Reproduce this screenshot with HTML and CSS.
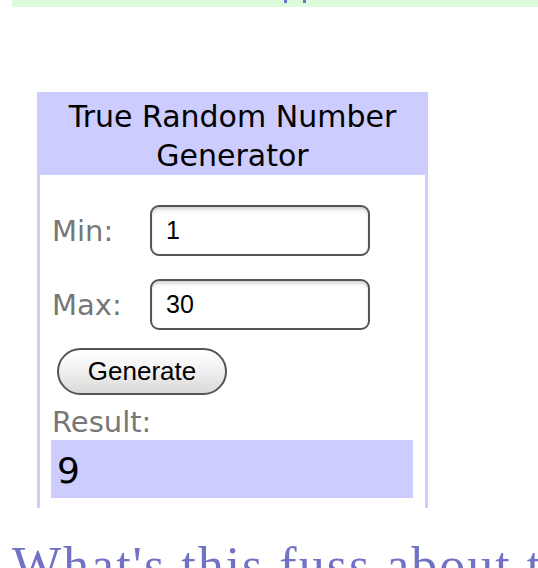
FILE: index.html
```html
<!DOCTYPE html>
<html>
<head>
<meta charset="utf-8">
<title>True Random Number Generator</title>
<link rel="stylesheet" href="styles.css">
</head>
<body>
<div class="topbar"><span class="mark"></span><span class="mark"></span></div>
<div class="widget">
  <div class="widget-head">True Random Number Generator</div>
  <div class="widget-body">
    <div class="field">
      <label class="label" for="min">Min:</label>
      <input class="num" id="min" type="text" value="1">
    </div>
    <div class="field">
      <label class="label" for="max">Max:</label>
      <input class="num" id="max" type="text" value="30">
    </div>
    <button class="gen" type="button">Generate</button>
    <div class="result-label">Result:</div>
    <div class="result">9</div>
  </div>
</div>
<h2 class="fuss">What's this fuss about true randomness?</h2>
</body>
</html>
```

FILE: styles.css
```css
html, body {
  margin: 0;
  padding: 0;
  background: #fff;
  overflow: hidden;
}

.topbar {
  margin-left: 12px;
  height: 7px;
  background: #dcfcdc;
  display: flex;
  padding-left: 272px;
  gap: 16px;
}

.mark {
  display: block;
  width: 3px;
  height: 3px;
  background: #6f6fc8;
}

.widget {
  margin: 85px 0 0 37px;
  width: 391px;
  box-sizing: border-box;
  border: 3px solid #ccccff;
  border-bottom: none;
  font-family: "DejaVu Sans", Verdana, sans-serif;
}

.widget-head {
  background: #ccccff;
  color: #000;
  text-align: center;
  font-size: 30px;
  line-height: 39px;
  padding: 2px 10px 0;
}

.widget-body {
  background: #fff;
  padding: 30px 12px 10px 11px;
}

.field {
  display: flex;
  align-items: center;
  margin-bottom: 23px;
}

.field + .field {
  margin-bottom: 18px;
}

.label {
  width: 98px;
  padding-left: 1px;
  color: #777;
  font-size: 29px;
}

.num {
  width: 220px;
  height: 51px;
  box-sizing: border-box;
  border: 2px solid #555;
  border-radius: 9px;
  background: linear-gradient(#f0f0f0, #fff 8px);
  box-shadow: inset 0 2px 3px rgba(0,0,0,0.12);
  font-family: "Liberation Sans", Arial, sans-serif;
  font-size: 25px;
  color: #000;
  padding: 0 0 0 14px;
  margin: 0;
  outline: none;
}

.gen {
  display: block;
  margin: 0 0 10px 6px;
  width: 170px;
  height: 47px;
  box-sizing: border-box;
  border: 2px solid #555;
  border-radius: 24px;
  background: linear-gradient(#ffffff, #f2f2f2 45%, #d9d9d9);
  font-family: "Liberation Sans", Arial, sans-serif;
  font-size: 26px;
  color: #000;
  padding: 0;
}

.result-label {
  color: #777;
  font-size: 29px;
  line-height: 34px;
  padding-left: 1px;
  margin-bottom: 1px;
}

.result {
  width: 362px;
  height: 58px;
  box-sizing: border-box;
  background: #ccccff;
  font-size: 36px;
  line-height: 55px;
  padding: 3px 0 0 6px;
  color: #000;
}

.fuss {
  margin: 29px 0 0 12px;
  font-family: "Liberation Serif", "Times New Roman", serif;
  font-weight: normal;
  font-size: 52px;
  line-height: 57px;
  letter-spacing: 2px;
  color: #7171c6;
  white-space: nowrap;
  overflow: hidden;
}
```
